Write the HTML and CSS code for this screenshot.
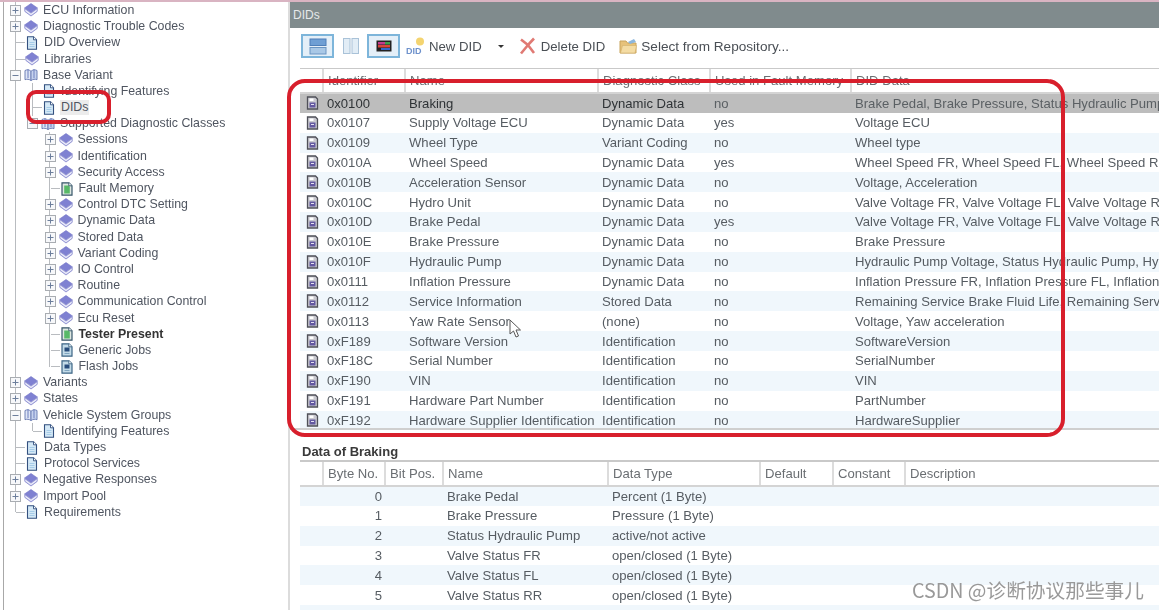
FILE: index.html
```html
<!DOCTYPE html>
<html lang="en">
<head>
<meta charset="utf-8">
<title>DIDs</title>
<link rel="stylesheet" href="styles.css">
</head>
<body>
<svg class="defs" width="0" height="0" aria-hidden="true">
  <symbol id="book" viewBox="0 0 14 14">
    <path d="M7 .5 13.500 5 7 9.500.5 5z" fill="#7f81d2" stroke="#7577c6" stroke-width=".6"/>
    <path d="M.8 5.400v3L7 13l6.200-4.600v-3L7 10z" fill="#c9cbee" stroke="#8385cc" stroke-width=".8"/>
    <path d="M1.500 7.500 7 11.400l5.500-3.900" fill="none" stroke="#fff" stroke-width=".8"/>
  </symbol>
  <symbol id="open" viewBox="0 0 14 14">
    <path d="M1 2.500c2-1 4-1 6 .8v9.200c-2-1.400-4-1.600-6-.8z" fill="#dfe6f6" stroke="#6f80b6"/>
    <path d="M13 2.500c-2-1-4-1-6 .8v9.200c2-1.400 4-1.600 6-.8z" fill="#c6d3ee" stroke="#6f80b6"/>
    <path d="M3 1h2v9H3zM9 1h2v9H9z" fill="#7f90c8" opacity=".6"/>
  </symbol>
  <symbol id="doc" viewBox="0 0 14 14">
    <path d="M2.500.8h6l3 3v9.400h-9z" fill="#d4e8f6" stroke="#33507f" stroke-width="1.100"/>
    <path d="M8.500.8v3h3" fill="#fff" stroke="#33507f" stroke-width=".9"/>
    <path d="M4.500 6.500h5M4.500 8.500h5M4.500 10.500h5" stroke="#9fc8e6" stroke-width=".9"/>
  </symbol>
  <symbol id="fault" viewBox="0 0 14 14">
    <path d="M2 .8h7l3 3v9.400H2z" fill="#dfe8e2" stroke="#37566a" stroke-width="1.200"/>
    <path d="M4.200 3.500h4.600l1 1.500v6.500H4.200z" fill="#58b968"/>
    <path d="M8.800.8v3H12" fill="#fff" stroke="#37566a" stroke-width=".9"/>
  </symbol>
  <symbol id="job" viewBox="0 0 14 14">
    <path d="M2 .8h7l3 3v9.400H2z" fill="#c3dbe8" stroke="#3d6585" stroke-width="1.200"/>
    <path d="M4.500 4.500h5v4h-5z" fill="#284d7c"/>
    <path d="M8.800.8v3H12" fill="#fff" stroke="#3d6585" stroke-width=".9"/>
    <path d="M4.500 10.500h5" stroke="#7fa5c0"/>
  </symbol>
  <symbol id="plus" viewBox="0 0 11 11">
    <rect x=".5" y=".5" width="10" height="10" fill="#f7f8fa" stroke="#a9adb2"/>
    <path d="M2.500 5.500h6M5.500 2.500v6" stroke="#6d7f9c"/>
  </symbol>
  <symbol id="minus" viewBox="0 0 11 11">
    <rect x=".5" y=".5" width="10" height="10" fill="#f7f8fa" stroke="#a9adb2"/>
    <path d="M2.500 5.500h6" stroke="#6d7f9c"/>
  </symbol>
  <symbol id="did" viewBox="0 0 13 14">
    <path d="M1.500 1h8l2 2v10h-10z" fill="#c9c9d0" stroke="#4f5058" stroke-width="1.300"/>
    <path d="M3.500 2.500h4v2.500h-4z" fill="#fff"/>
    <path d="M3.500 6.500h6v5h-6z" fill="#6358a0"/>
    <path d="M5 8.500h3" stroke="#e5e2f2"/>
  </symbol>
</svg>

<div class="page">
  <nav class="tree">
    <div class="row"><span class="tw"><svg class="bx"><use href="#plus"/></svg></span><svg class="ic"><use href="#book"/></svg><span class="lb">ECU Information</span></div>
    <div class="row"><span class="tw"><svg class="bx"><use href="#plus"/></svg></span><svg class="ic"><use href="#book"/></svg><span class="lb">Diagnostic Trouble Codes</span></div>
    <div class="row"><span class="tw leaf"></span><svg class="ic"><use href="#doc"/></svg><span class="lb">DID Overview</span></div>
    <div class="row"><span class="tw leaf"></span><svg class="ic"><use href="#book"/></svg><span class="lb">Libraries</span></div>
    <div class="row"><span class="tw"><svg class="bx"><use href="#minus"/></svg></span><svg class="ic"><use href="#open"/></svg><span class="lb">Base Variant</span></div>
    <div class="row l1"><span class="tw leaf"></span><svg class="ic"><use href="#doc"/></svg><span class="lb">Identifying Features</span></div>
    <div class="row l1"><span class="tw leaf"></span><svg class="ic"><use href="#doc"/></svg><span class="lb cur">DIDs</span></div>
    <div class="row l1b"><span class="tw"><svg class="bx"><use href="#minus"/></svg></span><svg class="ic"><use href="#open"/></svg><span class="lb">Supported Diagnostic Classes</span></div>
    <div class="row l2"><span class="tw"><svg class="bx"><use href="#plus"/></svg></span><svg class="ic"><use href="#book"/></svg><span class="lb">Sessions</span></div>
    <div class="row l2"><span class="tw"><svg class="bx"><use href="#plus"/></svg></span><svg class="ic"><use href="#book"/></svg><span class="lb">Identification</span></div>
    <div class="row l2"><span class="tw"><svg class="bx"><use href="#plus"/></svg></span><svg class="ic"><use href="#book"/></svg><span class="lb">Security Access</span></div>
    <div class="row l2"><span class="tw leaf"></span><svg class="ic"><use href="#fault"/></svg><span class="lb">Fault Memory</span></div>
    <div class="row l2"><span class="tw"><svg class="bx"><use href="#plus"/></svg></span><svg class="ic"><use href="#book"/></svg><span class="lb">Control DTC Setting</span></div>
    <div class="row l2"><span class="tw"><svg class="bx"><use href="#plus"/></svg></span><svg class="ic"><use href="#book"/></svg><span class="lb">Dynamic Data</span></div>
    <div class="row l2"><span class="tw"><svg class="bx"><use href="#plus"/></svg></span><svg class="ic"><use href="#book"/></svg><span class="lb">Stored Data</span></div>
    <div class="row l2"><span class="tw"><svg class="bx"><use href="#plus"/></svg></span><svg class="ic"><use href="#book"/></svg><span class="lb">Variant Coding</span></div>
    <div class="row l2"><span class="tw"><svg class="bx"><use href="#plus"/></svg></span><svg class="ic"><use href="#book"/></svg><span class="lb">IO Control</span></div>
    <div class="row l2"><span class="tw"><svg class="bx"><use href="#plus"/></svg></span><svg class="ic"><use href="#book"/></svg><span class="lb">Routine</span></div>
    <div class="row l2"><span class="tw"><svg class="bx"><use href="#plus"/></svg></span><svg class="ic"><use href="#book"/></svg><span class="lb">Communication Control</span></div>
    <div class="row l2"><span class="tw"><svg class="bx"><use href="#plus"/></svg></span><svg class="ic"><use href="#book"/></svg><span class="lb">Ecu Reset</span></div>
    <div class="row l2"><span class="tw leaf"></span><svg class="ic"><use href="#fault"/></svg><span class="lb strong">Tester Present</span></div>
    <div class="row l2"><span class="tw leaf"></span><svg class="ic"><use href="#job"/></svg><span class="lb">Generic Jobs</span></div>
    <div class="row l2 l2end"><span class="tw leaf"></span><svg class="ic"><use href="#job"/></svg><span class="lb">Flash Jobs</span></div>
    <div class="row"><span class="tw"><svg class="bx"><use href="#plus"/></svg></span><svg class="ic"><use href="#book"/></svg><span class="lb">Variants</span></div>
    <div class="row"><span class="tw"><svg class="bx"><use href="#plus"/></svg></span><svg class="ic"><use href="#book"/></svg><span class="lb">States</span></div>
    <div class="row"><span class="tw"><svg class="bx"><use href="#minus"/></svg></span><svg class="ic"><use href="#open"/></svg><span class="lb">Vehicle System Groups</span></div>
    <div class="row l1 l1end"><span class="tw leaf"></span><svg class="ic"><use href="#doc"/></svg><span class="lb">Identifying Features</span></div>
    <div class="row"><span class="tw leaf"></span><svg class="ic"><use href="#doc"/></svg><span class="lb">Data Types</span></div>
    <div class="row"><span class="tw leaf"></span><svg class="ic"><use href="#doc"/></svg><span class="lb">Protocol Services</span></div>
    <div class="row"><span class="tw"><svg class="bx"><use href="#plus"/></svg></span><svg class="ic"><use href="#book"/></svg><span class="lb">Negative Responses</span></div>
    <div class="row"><span class="tw"><svg class="bx"><use href="#plus"/></svg></span><svg class="ic"><use href="#book"/></svg><span class="lb">Import Pool</span></div>
    <div class="row end"><span class="tw leaf"></span><svg class="ic"><use href="#doc"/></svg><span class="lb">Requirements</span></div>
  </nav>

  <main class="main">
    <header class="title">DIDs</header>
    <div class="toolbar">
      <button class="tbtn on">
        <svg width="18" height="17" viewBox="0 0 18 17"><rect x="1" y="1" width="16" height="6.500" fill="#6f9fd4" stroke="#4f7fb8"/><rect x="1" y="9.500" width="16" height="6.500" fill="#a9c8e6" stroke="#6a95c2"/></svg>
      </button>
      <button class="tbtn plain">
        <svg width="18" height="18" viewBox="0 0 18 18"><rect x="1.500" y="1.500" width="6.500" height="15" fill="#e2edf6" stroke="#a9c2d8"/><rect x="10" y="1.500" width="6.500" height="15" fill="#e2edf6" stroke="#a9c2d8"/></svg>
      </button>
      <button class="tbtn on">
        <svg width="16" height="12" viewBox="0 0 16 12"><rect x=".5" y=".5" width="15" height="11" fill="#222"/><rect x="2" y="2" width="7" height="2.500" fill="#c23a8e"/><rect x="9" y="2" width="5" height="2.500" fill="#3ea04a"/><rect x="2" y="5" width="12" height="2.500" fill="#d8443c"/><rect x="5" y="8" width="9" height="2" fill="#3366cc"/></svg>
      </button>
      <span class="tool first">
        <svg class="tic" width="21" height="20" viewBox="0 0 21 20"><circle cx="14" cy="5.500" r="4" fill="#f4d470"/><text x="0" y="18" class="didmark">DID</text></svg>
        New DID
      </span>
      <span class="caret"></span>
      <span class="tool del">
        <svg class="tic" width="18" height="18" viewBox="0 0 18 18"><path d="M2 2.500 9 8l6-6.500M15 16 9 8l-7 8.500" fill="none" stroke="#e07a74" stroke-width="2.600"/></svg>
        Delete DID
      </span>
      <span class="tool folder">
        <svg class="tic" width="19" height="17" viewBox="0 0 19 17"><path d="M1 3h6l1.500 2H17v10H1z" fill="#e7c27a" stroke="#c9a45c"/><path d="M9 4l6-3 2 3-6 2z" fill="#8cb7de"/><path d="M1.500 15 3.500 7.500h14L16 15z" fill="#f4dca4" stroke="#d2b06a" stroke-width=".6"/></svg>
        Select from Repository...
      </span>
    </div>

    <section class="pane upper">
      <table class="grid">
        <colgroup><col class="a0"><col class="a1"><col class="a2"><col class="a3"><col class="a4"><col class="a5"></colgroup>
        <thead><tr><th></th><th>Identifier<span class="sort"></span></th><th>Name</th><th>Diagnostic Class</th><th>Used in Fault Memory</th><th>DID Data</th></tr></thead>
        <tbody>
          <tr class="sel"><td class="ico"><svg class="rowic"><use href="#did"/></svg></td><td>0x0100</td><td>Braking</td><td>Dynamic Data</td><td class="dim">no</td><td class="dim">Brake Pedal, Brake Pressure, Status Hydraulic Pump, Valve Status FR, Valve Status FL</td></tr>
          <tr><td class="ico"><svg class="rowic"><use href="#did"/></svg></td><td>0x0107</td><td>Supply Voltage ECU</td><td>Dynamic Data</td><td>yes</td><td>Voltage ECU</td></tr>
          <tr><td class="ico"><svg class="rowic"><use href="#did"/></svg></td><td>0x0109</td><td>Wheel Type</td><td>Variant Coding</td><td>no</td><td>Wheel type</td></tr>
          <tr><td class="ico"><svg class="rowic"><use href="#did"/></svg></td><td>0x010A</td><td>Wheel Speed</td><td>Dynamic Data</td><td>yes</td><td>Wheel Speed FR, Wheel Speed FL, Wheel Speed RR, Wheel Speed RL</td></tr>
          <tr><td class="ico"><svg class="rowic"><use href="#did"/></svg></td><td>0x010B</td><td>Acceleration Sensor</td><td>Dynamic Data</td><td>no</td><td>Voltage, Acceleration</td></tr>
          <tr><td class="ico"><svg class="rowic"><use href="#did"/></svg></td><td>0x010C</td><td>Hydro Unit</td><td>Dynamic Data</td><td>no</td><td>Valve Voltage FR, Valve Voltage FL, Valve Voltage RR, Valve Voltage RL</td></tr>
          <tr><td class="ico"><svg class="rowic"><use href="#did"/></svg></td><td>0x010D</td><td>Brake Pedal</td><td>Dynamic Data</td><td>yes</td><td>Valve Voltage FR, Valve Voltage FL, Valve Voltage RR, Valve Voltage RL</td></tr>
          <tr><td class="ico"><svg class="rowic"><use href="#did"/></svg></td><td>0x010E</td><td>Brake Pressure</td><td>Dynamic Data</td><td>no</td><td>Brake Pressure</td></tr>
          <tr><td class="ico"><svg class="rowic"><use href="#did"/></svg></td><td>0x010F</td><td>Hydraulic Pump</td><td>Dynamic Data</td><td>no</td><td>Hydraulic Pump Voltage, Status Hydraulic Pump, Hydraulic Pump</td></tr>
          <tr><td class="ico"><svg class="rowic"><use href="#did"/></svg></td><td>0x0111</td><td>Inflation Pressure</td><td>Dynamic Data</td><td>no</td><td>Inflation Pressure FR, Inflation Pressure FL, Inflation Pressure RR</td></tr>
          <tr><td class="ico"><svg class="rowic"><use href="#did"/></svg></td><td>0x0112</td><td>Service Information</td><td>Stored Data</td><td>no</td><td>Remaining Service Brake Fluid Life, Remaining Service Life</td></tr>
          <tr><td class="ico"><svg class="rowic"><use href="#did"/></svg></td><td>0x0113</td><td>Yaw Rate Sensor</td><td>(none)</td><td>no</td><td>Voltage, Yaw acceleration</td></tr>
          <tr><td class="ico"><svg class="rowic"><use href="#did"/></svg></td><td>0xF189</td><td>Software Version</td><td>Identification</td><td>no</td><td>SoftwareVersion</td></tr>
          <tr><td class="ico"><svg class="rowic"><use href="#did"/></svg></td><td>0xF18C</td><td>Serial Number</td><td>Identification</td><td>no</td><td>SerialNumber</td></tr>
          <tr><td class="ico"><svg class="rowic"><use href="#did"/></svg></td><td>0xF190</td><td>VIN</td><td>Identification</td><td>no</td><td>VIN</td></tr>
          <tr><td class="ico"><svg class="rowic"><use href="#did"/></svg></td><td>0xF191</td><td>Hardware Part Number</td><td>Identification</td><td>no</td><td>PartNumber</td></tr>
          <tr><td class="ico"><svg class="rowic"><use href="#did"/></svg></td><td>0xF192</td><td>Hardware Supplier Identification</td><td>Identification</td><td>no</td><td>HardwareSupplier</td></tr>
        </tbody>
      </table>
    </section>

    <h2 class="subhead">Data of Braking</h2>
    <section class="pane lower">
      <table class="grid data">
        <colgroup><col class="b0"><col class="b1"><col class="b2"><col class="b3"><col class="b4"><col class="b5"><col class="b6"><col class="b7"></colgroup>
        <thead><tr><th></th><th>Byte No.</th><th>Bit Pos.</th><th>Name</th><th>Data Type</th><th>Default</th><th>Constant</th><th>Description</th></tr></thead>
        <tbody>
          <tr><td></td><td class="num">0</td><td></td><td>Brake Pedal</td><td>Percent (1 Byte)</td><td></td><td></td><td></td></tr>
          <tr><td></td><td class="num">1</td><td></td><td>Brake Pressure</td><td>Pressure (1 Byte)</td><td></td><td></td><td></td></tr>
          <tr><td></td><td class="num">2</td><td></td><td>Status Hydraulic Pump</td><td>active/not active</td><td></td><td></td><td></td></tr>
          <tr><td></td><td class="num">3</td><td></td><td>Valve Status FR</td><td>open/closed (1 Byte)</td><td></td><td></td><td></td></tr>
          <tr><td></td><td class="num">4</td><td></td><td>Valve Status FL</td><td>open/closed (1 Byte)</td><td></td><td></td><td></td></tr>
          <tr><td></td><td class="num">5</td><td></td><td>Valve Status RR</td><td>open/closed (1 Byte)</td><td></td><td></td><td></td></tr>
          <tr><td></td><td class="num">6</td><td></td><td>Valve Status RL</td><td>open/closed (1 Byte)</td><td></td><td></td><td></td></tr>
        </tbody>
      </table>
    </section>
  </main>

  <div class="mark mark-tree"></div>
  <div class="mark mark-table"></div>
  <svg class="pointer" width="14" height="20" viewBox="0 0 14 20"><path d="M1 1v14l3.500-3 2.500 6 2.500-1-2.500-6h4.500z" fill="#fff" stroke="#555" stroke-width="1"/></svg>
  <div class="watermark">CSDN @诊断协议那些事儿</div>
</div>
</body>
</html>
```

FILE: styles.css
```css
* { box-sizing: border-box; }
html, body { margin: 0; height: 100%; overflow: hidden; background: #fff; }
.defs { position: absolute; }

.page {
  position: relative;
  display: flex;
  width: 1159px;
  height: 610px;
  overflow: hidden;
  border-top: 2px solid #d9b4c2;
  font-family: "Liberation Sans", Arial, sans-serif;
  font-size: 13.1px;
  color: #565c62;
  filter: blur(0.5px);
}

/* tree */
.tree {
  flex: 0 0 287px;
  margin-left: 3px;
  padding-top: 0.4px;
  border-left: 1px solid #a8a8a8;
  border-right: 2px solid #dcdcdc;
  white-space: nowrap;
  overflow: hidden;
  font-size: 12.35px;
  color: #4f5560;
}
.row {
  display: flex;
  align-items: center;
  height: 16.2px;
  padding-left: 3px;
  background: linear-gradient(#b9bcc0, #b9bcc0) 11px 0 / 1px 100% no-repeat;
}
.row.end { background-size: 1px 50%; }
.row.l1 {
  padding-left: 20px;
  background:
    linear-gradient(#b9bcc0, #b9bcc0) 11px 0 / 1px 100% no-repeat,
    linear-gradient(#b9bcc0, #b9bcc0) 28px 0 / 1px 100% no-repeat;
}
.row.l1end {
  background:
    linear-gradient(#b9bcc0, #b9bcc0) 11px 0 / 1px 100% no-repeat,
    linear-gradient(#b9bcc0, #b9bcc0) 28px 0 / 1px 50% no-repeat;
}
.row.l1b { padding-left: 20px; }
.row.l2 {
  padding-left: 37.5px;
  background:
    linear-gradient(#b9bcc0, #b9bcc0) 11px 0 / 1px 100% no-repeat,
    linear-gradient(#b9bcc0, #b9bcc0) 45px 0 / 1px 100% no-repeat;
}
.row.l2end {
  background:
    linear-gradient(#b9bcc0, #b9bcc0) 11px 0 / 1px 100% no-repeat,
    linear-gradient(#b9bcc0, #b9bcc0) 45px 0 / 1px 50% no-repeat;
}
.tw {
  position: relative;
  display: flex;
  flex: 0 0 17px;
  height: 100%;
  align-items: center;
  justify-content: center;
}
.tw.leaf::before {
  content: "";
  width: 9px;
  height: 1px;
  margin-left: 9px;
  background: #b9bcc0;
}
.bx { width: 11px; height: 11px; }
.ic { flex: 0 0 14px; width: 14px; height: 14px; }
.lb { margin-left: 4px; padding: 0 1px; line-height: 15px; }
.lb.cur { background: #ececec; }
.lb.strong { font-weight: 700; color: #333; }

/* main */
.main {
  flex: 1 1 auto;
  display: flex;
  flex-direction: column;
  min-width: 0;
  overflow: hidden;
}
.title {
  flex: 0 0 26px;
  padding: 6px 0 0 3px;
  background: #808b8d;
  color: #e6e9ea;
  font-size: 12px;
}
.toolbar {
  flex: 0 0 40px;
  display: flex;
  align-items: center;
  padding: 0 0 4px 11px;
  font-size: 13.2px;
  color: #4a4f55;
}
.tbtn {
  display: flex;
  align-items: center;
  justify-content: center;
  width: 33px;
  height: 24px;
  padding: 0;
  background: none;
  border: 0;
}
.tbtn.on { background: #e4eff8; border: 2px solid #7db5da; }
.tool { display: flex; align-items: center; white-space: nowrap; }
.tool.first { margin-left: 6px; }
.tic { flex: none; margin-right: 2px; }
.del .tic { margin-right: 4px; }
.didmark { font: 700 9px "Liberation Sans", sans-serif; fill: #6f92cc; }
.caret {
  width: 0;
  height: 0;
  margin: 0 15px 0 16px;
  border: 3px solid transparent;
  border-top: 3px solid #333;
  border-bottom: 0;
}
.tool.folder { margin-left: 14px; font-size: 13.6px; }
.folder .tic { margin-right: 3px; }

.pane { margin-left: 10px; overflow: hidden; }
.upper { flex: 0 0 360px; border-top: 1px solid #c9c9c9; }
.lower { flex: 1 1 auto; border-top: 2px solid #c9c9c9; }
.subhead {
  flex: 0 0 32px;
  margin: 0;
  padding: 14px 0 0 12px;
  border-top: 2px solid #cfcfcf;
  font-size: 13px;
  line-height: 16px;
  font-weight: 700;
  color: #3a3a3a;
}

.grid { table-layout: fixed; border-collapse: collapse; width: 859px; }
.grid th {
  height: 24px;
  padding: 0 0 0 4px;
  text-align: left;
  font-weight: 400;
  color: #6a6e72;
  background: #fff;
  border-right: 2px solid #dcdcdc;
  border-bottom: 2px solid #d4d4d4;
  white-space: nowrap;
  overflow: hidden;
}
.grid th:last-child { border-right: 0; }
.grid td {
  height: 19.85px;
  padding: 0 0 0 4px;
  white-space: nowrap;
  overflow: hidden;
}
.grid tbody tr:nth-child(odd) { background: #f0f7fc; }
.grid tbody tr.sel { background: #bdbdbd; color: #2f3336; }
.grid tbody tr.sel td.dim { color: #5b6064; }
.grid td.ico { padding: 0 0 0 6px; }
.rowic { display: block; width: 13px; height: 14px; }
.sort {
  display: inline-block;
  width: 6px;
  height: 1px;
  margin-left: 10px;
  vertical-align: middle;
  background: #888;
}
.a0 { width: 23px; }
.a1 { width: 82px; }
.a2 { width: 193px; }
.a3 { width: 112px; }
.a4 { width: 141px; }
.a5 { width: 308px; }

.data .num { text-align: right; padding-right: 3px; }
.b0 { width: 23px; }
.b1 { width: 62px; }
.b2 { width: 58px; }
.b3 { width: 165px; }
.b4 { width: 152px; }
.b5 { width: 73px; }
.b6 { width: 72px; }
.b7 { width: 254px; }

/* annotation overlays */
.mark {
  position: absolute;
  border: 4px solid #d81f2c;
  pointer-events: none;
}
.mark-tree { left: 26px; top: 88px; width: 85px; height: 34px; border-radius: 10px; }
.mark-table { left: 287px; top: 77px; width: 778px; height: 358px; border-radius: 18px; }
.pointer { position: absolute; left: 509px; top: 317px; }
.watermark {
  position: absolute;
  right: 15px;
  top: 576px;
  font-family: "Noto Sans CJK SC", sans-serif;
  font-size: 19.7px;
  line-height: 24px;
  color: #999;
  white-space: nowrap;
}
```
